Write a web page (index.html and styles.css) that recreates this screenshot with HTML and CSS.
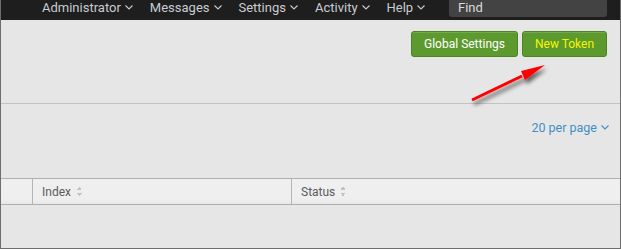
FILE: index.html
```html
<!DOCTYPE html>
<html lang="en">
<head>
  <meta charset="UTF-8" />
  <title>HTTP Event Collector</title>
  <link rel="stylesheet" href="styles.css">
</head>
<body>

  <div class="frame">
    <!-- Top nav -->
    <div class="navbar">
      <div class="nav-item">Administrator<svg class="caret" viewBox="0 0 8 5"><path d="M0.5 0.5 L4 4 L7.5 0.5" /></svg></div>
      <div class="nav-item">Messages<svg class="caret" viewBox="0 0 8 5"><path d="M0.5 0.5 L4 4 L7.5 0.5" /></svg></div>
      <div class="nav-item">Settings<svg class="caret" viewBox="0 0 8 5"><path d="M0.5 0.5 L4 4 L7.5 0.5" /></svg></div>
      <div class="nav-item">Activity<svg class="caret" viewBox="0 0 8 5"><path d="M0.5 0.5 L4 4 L7.5 0.5" /></svg></div>
      <div class="nav-item">Help<svg class="caret" viewBox="0 0 8 5"><path d="M0.5 0.5 L4 4 L7.5 0.5" /></svg></div>
      <div class="find">Find</div>
    </div>

    <!-- Page actions -->
    <div class="toolbar">
      <button class="btn">Global Settings</button>
      <button class="btn btn-hl">New Token</button>
    </div>

    <!-- Paging -->
    <div class="paging">
      <span class="per-page">20 per page<svg class="caret" viewBox="0 0 8 5"><path d="M0.5 0.5 L4 4 L7.5 0.5" /></svg></span>
    </div>

    <!-- Table header -->
    <div class="table-head">
      <div class="col col-check"></div>
      <div class="col col-index">Index <span class="sort"></span></div>
      <div class="col col-status">Status <span class="sort"></span></div>
    </div>
    <div class="table-body"></div>

    <!-- annotation arrow -->
    <svg class="arrow" width="100" height="50" viewBox="0 0 100 50">
      <defs>
        <filter id="shadow" x="-20%" y="-40%" width="140%" height="180%">
          <feGaussianBlur in="SourceAlpha" stdDeviation="2" />
          <feOffset dx="2" dy="4" />
          <feComponentTransfer><feFuncA type="linear" slope="0.6" /></feComponentTransfer>
          <feMerge><feMergeNode /><feMergeNode in="SourceGraphic" /></feMerge>
        </filter>
      </defs>
      <g filter="url(#shadow)">
        <line x1="12" y1="45" x2="62" y2="21" stroke="#ff0000" stroke-width="3" />
        <polygon points="85,10 61,16 65,25" fill="#ff0000" />
      </g>
    </svg>
  </div>

</body>
</html>
```

FILE: styles.css
```css
html, body {
  margin: 0;
  padding: 0;
  background-color: #e6e6e6;
  font-family: Roboto, "Liberation Sans", Arial, sans-serif;
}

.frame {
  position: relative;
  width: 621px;
  height: 249px;
  box-sizing: border-box;
  border: 1px solid #6e6e6e;
  border-top: none;
  overflow: hidden;
}

/* Top nav */
.navbar {
  display: flex;
  align-items: flex-start;
  height: 20px;
  margin: 0 -1px;
  padding-left: 42px;
  background-color: #1e1e1e;
  color: #c8ccd2;
  font-size: 13px;
}
.nav-item {
  margin-right: 17px;
  line-height: 16px;
  white-space: nowrap;
  flex-shrink: 0;
}
.caret {
  width: 8px;
  height: 5px;
  margin: 0 0 2px 4px;
  fill: none;
  stroke: currentColor;
  stroke-width: 1.1;
  vertical-align: middle;
}
.find {
  flex-shrink: 0;
  margin-left: auto;
  margin-right: 14px;
  width: 158px;
  height: 17px;
  padding-left: 9px;
  box-sizing: border-box;
  background-color: #434343;
  border-radius: 0 0 3px 3px;
  color: #dcdcdc;
  line-height: 16px;
}

/* Buttons */
.toolbar {
  display: flex;
  justify-content: flex-end;
  gap: 4px;
  height: 84px;
  padding: 11px 13px 0 0;
  box-sizing: border-box;
  border-bottom: 1px solid #c3c3c3;
}
.btn {
  height: 26px;
  padding: 0 12px;
  background-color: #5d9a2e;
  border: 1px solid #4d8423;
  border-radius: 3px;
  color: #ffffff;
  font-family: inherit;
  font-size: 12px;
  box-shadow: inset 0 1px 0 rgba(255, 255, 255, 0.15);
}
.btn:first-child {
  width: 107px;
}
.btn-hl {
  width: 85px;
  padding: 0;
  color: #f5f500;
}

/* Paging */
.paging {
  display: flex;
  justify-content: flex-end;
  height: 75px;
  padding: 16px 11px 0 0;
  box-sizing: border-box;
  border-bottom: 1px solid #b0b0b0;
}
.per-page {
  color: #3f8fc7;
  font-size: 12.5px;
}

/* Table */
.table-head {
  display: flex;
  height: 25px;
  background: linear-gradient(#efefef 80%, #e8e8e8);
  border-bottom: 1px solid #b0b0b0;
  color: #5b5b5b;
  font-size: 12px;
}
.col {
  display: flex;
  align-items: center;
  box-sizing: border-box;
  padding-left: 9px;
}
.col-check {
  width: 32px;
  border-right: 1px solid #b5b5b5;
}
.col-index {
  width: 259px;
  border-right: 1px solid #b5b5b5;
}
.col-status {
  flex: 1;
}
.sort {
  display: inline-block;
  width: 6px;
  height: 9px;
  margin-left: 5px;
  background:
    linear-gradient(135deg, transparent 50%, #c2c2c2 50%) 0 0 / 3px 3px no-repeat,
    linear-gradient(225deg, transparent 50%, #c2c2c2 50%) 3px 0 / 3px 3px no-repeat,
    linear-gradient(45deg, transparent 50%, #c2c2c2 50%) 0 6px / 3px 3px no-repeat,
    linear-gradient(315deg, transparent 50%, #c2c2c2 50%) 3px 6px / 3px 3px no-repeat;
}

/* Annotation */
.arrow {
  position: absolute;
  left: 459px;
  top: 55px;
  overflow: visible;
}
```
